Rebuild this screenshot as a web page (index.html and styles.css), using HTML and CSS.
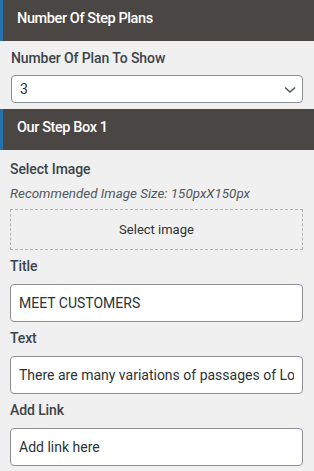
FILE: index.html
```html
<!DOCTYPE html>
<html lang="en">
<head>
  <meta charset="UTF-8">
  <meta name="viewport" content="width=device-width, initial-scale=1.0">
  <title>Step Plans</title>
  <link rel="stylesheet" href="styles.css">
</head>
<body>
<div class="panel">
  <div class="panel-head">Number Of Step Plans</div>
  <div class="panel-body short">
    <label class="field-label">Number Of Plan To Show</label>
    <div class="select-wrap">
      <select class="select">
        <option>1</option>
        <option>2</option>
        <option selected>3</option>
        <option>4</option>
      </select>
      <svg class="chevron" width="12" height="8" viewBox="0 0 12 8">
        <path d="M1 1.5 L6 6 L11 1.5" fill="none" stroke="#50575e" stroke-width="1.6"/>
      </svg>
    </div>
  </div>

  <div class="panel-head">Our Step Box 1</div>
  <div class="panel-body">
    <label class="field-label">Select Image</label>
    <p class="hint">Recommended Image Size: 150pxX150px</p>
    <button class="image-drop">Select image</button>

    <div class="field">
      <label class="field-label">Title</label>
      <input type="text" class="text-input" value="MEET CUSTOMERS">
    </div>
    <div class="field">
      <label class="field-label">Text</label>
      <input type="text" class="text-input" value="There are many variations of passages of Lorem Ipsum available">
    </div>
    <div class="field">
      <label class="field-label">Add Link</label>
      <input type="text" class="text-input" placeholder="Add link here">
    </div>
  </div>
</div>
</body>
</html>
```

FILE: styles.css
```css
* {
  box-sizing: border-box;
}
body {
  margin: 0;
  background: #f0f0f0;
  font-family: Roboto, 'Noto Sans', sans-serif;
  color: #3c434a;
}
.panel {
  width: 314px;
}
.panel-head {
  height: 41px;
  line-height: 38px;
  padding-left: 14px;
  background: #4a4644;
  border-left: 3px solid #2271b1;
  color: #fff;
  font-size: 14.5px;
  font-weight: 500;
  letter-spacing: -0.4px;
}
.panel-body {
  padding: 9px 11px 8px 10px;
}
.panel-body.short {
  padding: 7px 11px 6px 11px;
}
.field-label {
  display: block;
  height: 20px;
  line-height: 20px;
  font-size: 14px;
  font-weight: 500;
  letter-spacing: -0.1px;
}
.select-wrap {
  position: relative;
  margin-top: 7px;
}
.select {
  display: block;
  width: 100%;
  height: 28px;
  padding: 0 30px 0 8px;
  appearance: none;
  -webkit-appearance: none;
  background: #fff;
  border: 1px solid #8c8f94;
  border-radius: 4px;
  font-family: Roboto, sans-serif;
  font-size: 14px;
  color: #2c3338;
}
.chevron {
  position: absolute;
  right: 7px;
  top: 11px;
}
.hint {
  margin: 6px 0 0;
  height: 18px;
  line-height: 18px;
  font-size: 13.4px;
  font-style: italic;
  color: #50575e;
}
.image-drop {
  display: block;
  width: 100%;
  height: 41px;
  margin-top: 6px;
  background: transparent;
  border: 1px dashed #b4b4b4;
  font-family: Roboto, sans-serif;
  font-size: 13px;
  color: #2c3338;
  cursor: pointer;
}
.field {
  margin-top: 6px;
}
.text-input {
  display: block;
  width: 100%;
  height: 38px;
  margin-top: 8px;
  padding: 0 8px;
  background: #fff;
  border: 1px solid #8c8f94;
  border-radius: 4px;
  font-family: Roboto, sans-serif;
  font-size: 14px;
  color: #2c3338;
}
.text-input::placeholder {
  color: #2c3338;
  opacity: 1;
}
```
